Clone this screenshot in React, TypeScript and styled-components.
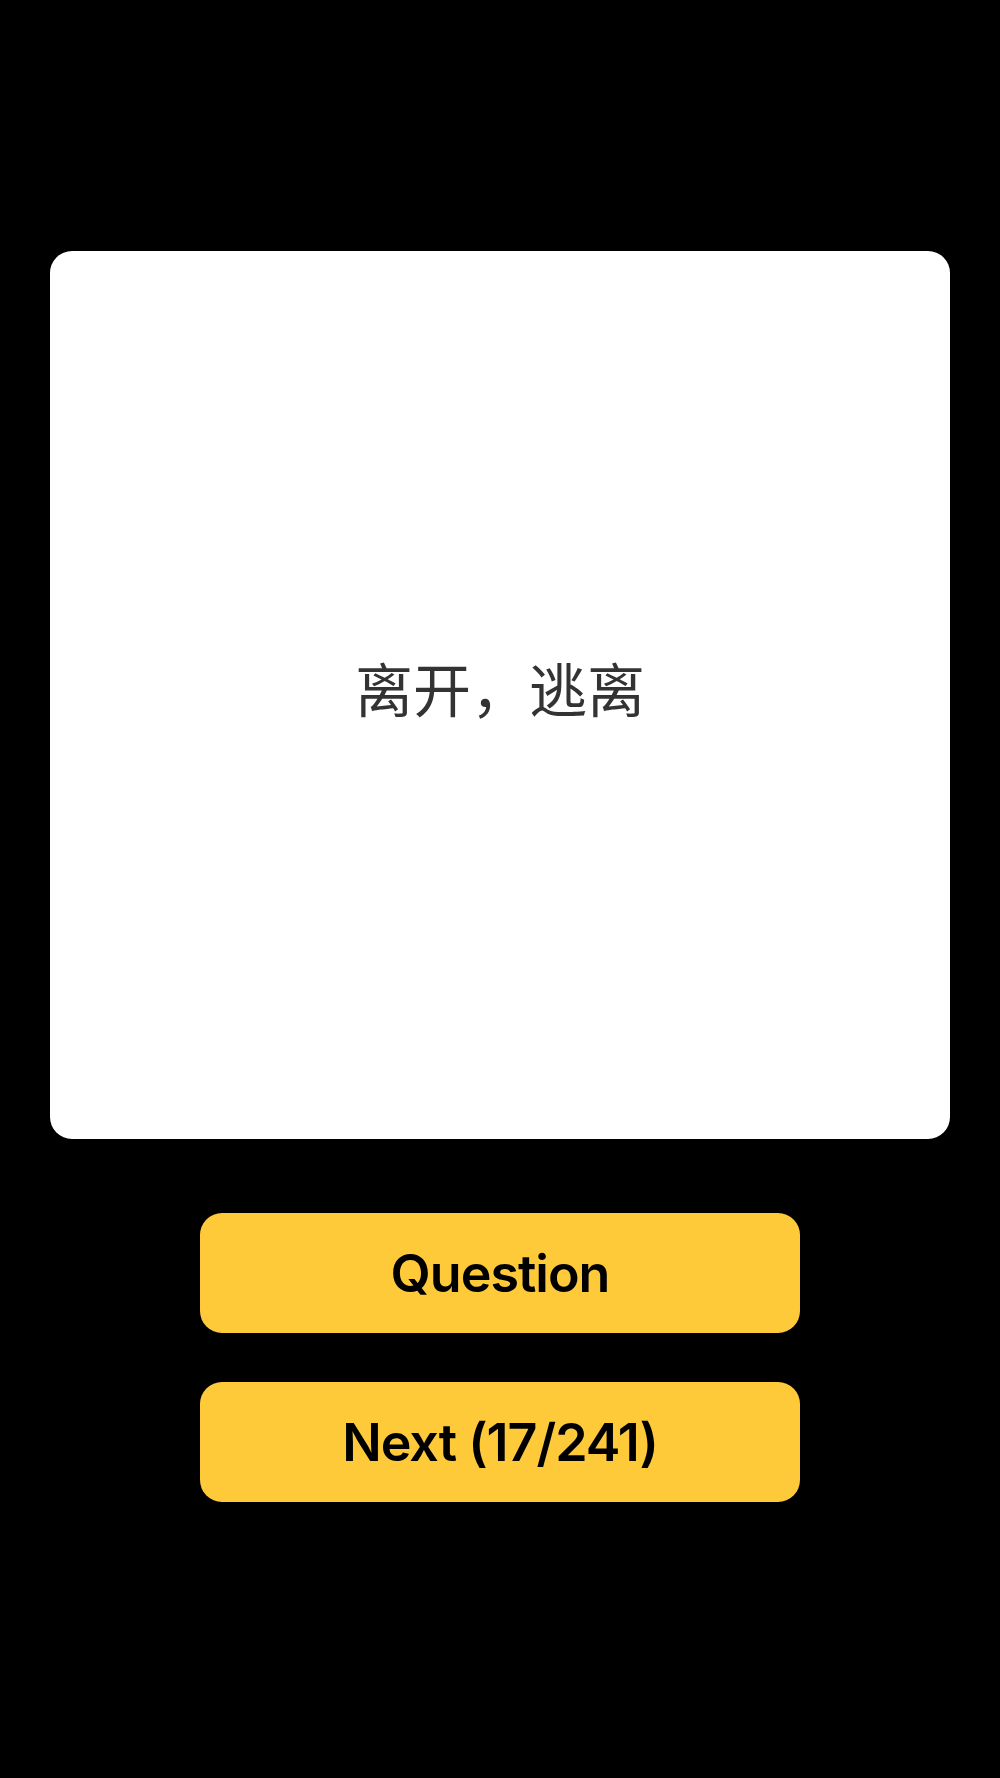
import React from 'react'
import styled, { createGlobalStyle } from 'styled-components'

const GlobalStyle = createGlobalStyle`
  html, body {
    margin: 0;
    padding: 0;
    background: #000;
  }
  #root {
    min-height: 1778px;
    background: #000;
  }
`

const Screen = styled.div`
  width: 1000px;
  min-height: 1778px;
  background-color: #000;
  display: flex;
  flex-direction: column;
  align-items: center;
  padding-top: 251px;
  box-sizing: border-box;
`

const Card = styled.div`
  width: 900px;
  height: 888px;
  background-color: #fff;
  border-radius: 22px;
  display: flex;
  align-items: center;
  justify-content: center;
`

const Word = styled.div`
  font-family: "Noto Sans CJK SC", "Noto Sans", sans-serif;
  font-size: 58px;
  font-weight: 400;
  color: #333;
  line-height: 1;
  margin-bottom: 16px;
`

const Actions = styled.div`
  margin-top: 74px;
  display: flex;
  flex-direction: column;
  gap: 49px;
`

const ActionButton = styled.button`
  width: 600px;
  height: 120px;
  border: none;
  border-radius: 22px;
  background-color: #ffca3a;
  color: #000;
  font-family: Inter, "Liberation Sans", sans-serif;
  font-size: 52px;
  font-weight: 600;
  letter-spacing: -1px;
  display: flex;
  align-items: center;
  justify-content: center;
  cursor: pointer;
  padding: 0;
`

const App = () => {
  const current = 17
  const total = 241
  return (
    <>
      <GlobalStyle />
      <Screen>
        <Card>
          <Word>离开，逃离</Word>
        </Card>
        <Actions>
          <ActionButton>Question</ActionButton>
          <ActionButton>Next ({current}/{total})</ActionButton>
        </Actions>
      </Screen>
    </>
  )
}

export default App
